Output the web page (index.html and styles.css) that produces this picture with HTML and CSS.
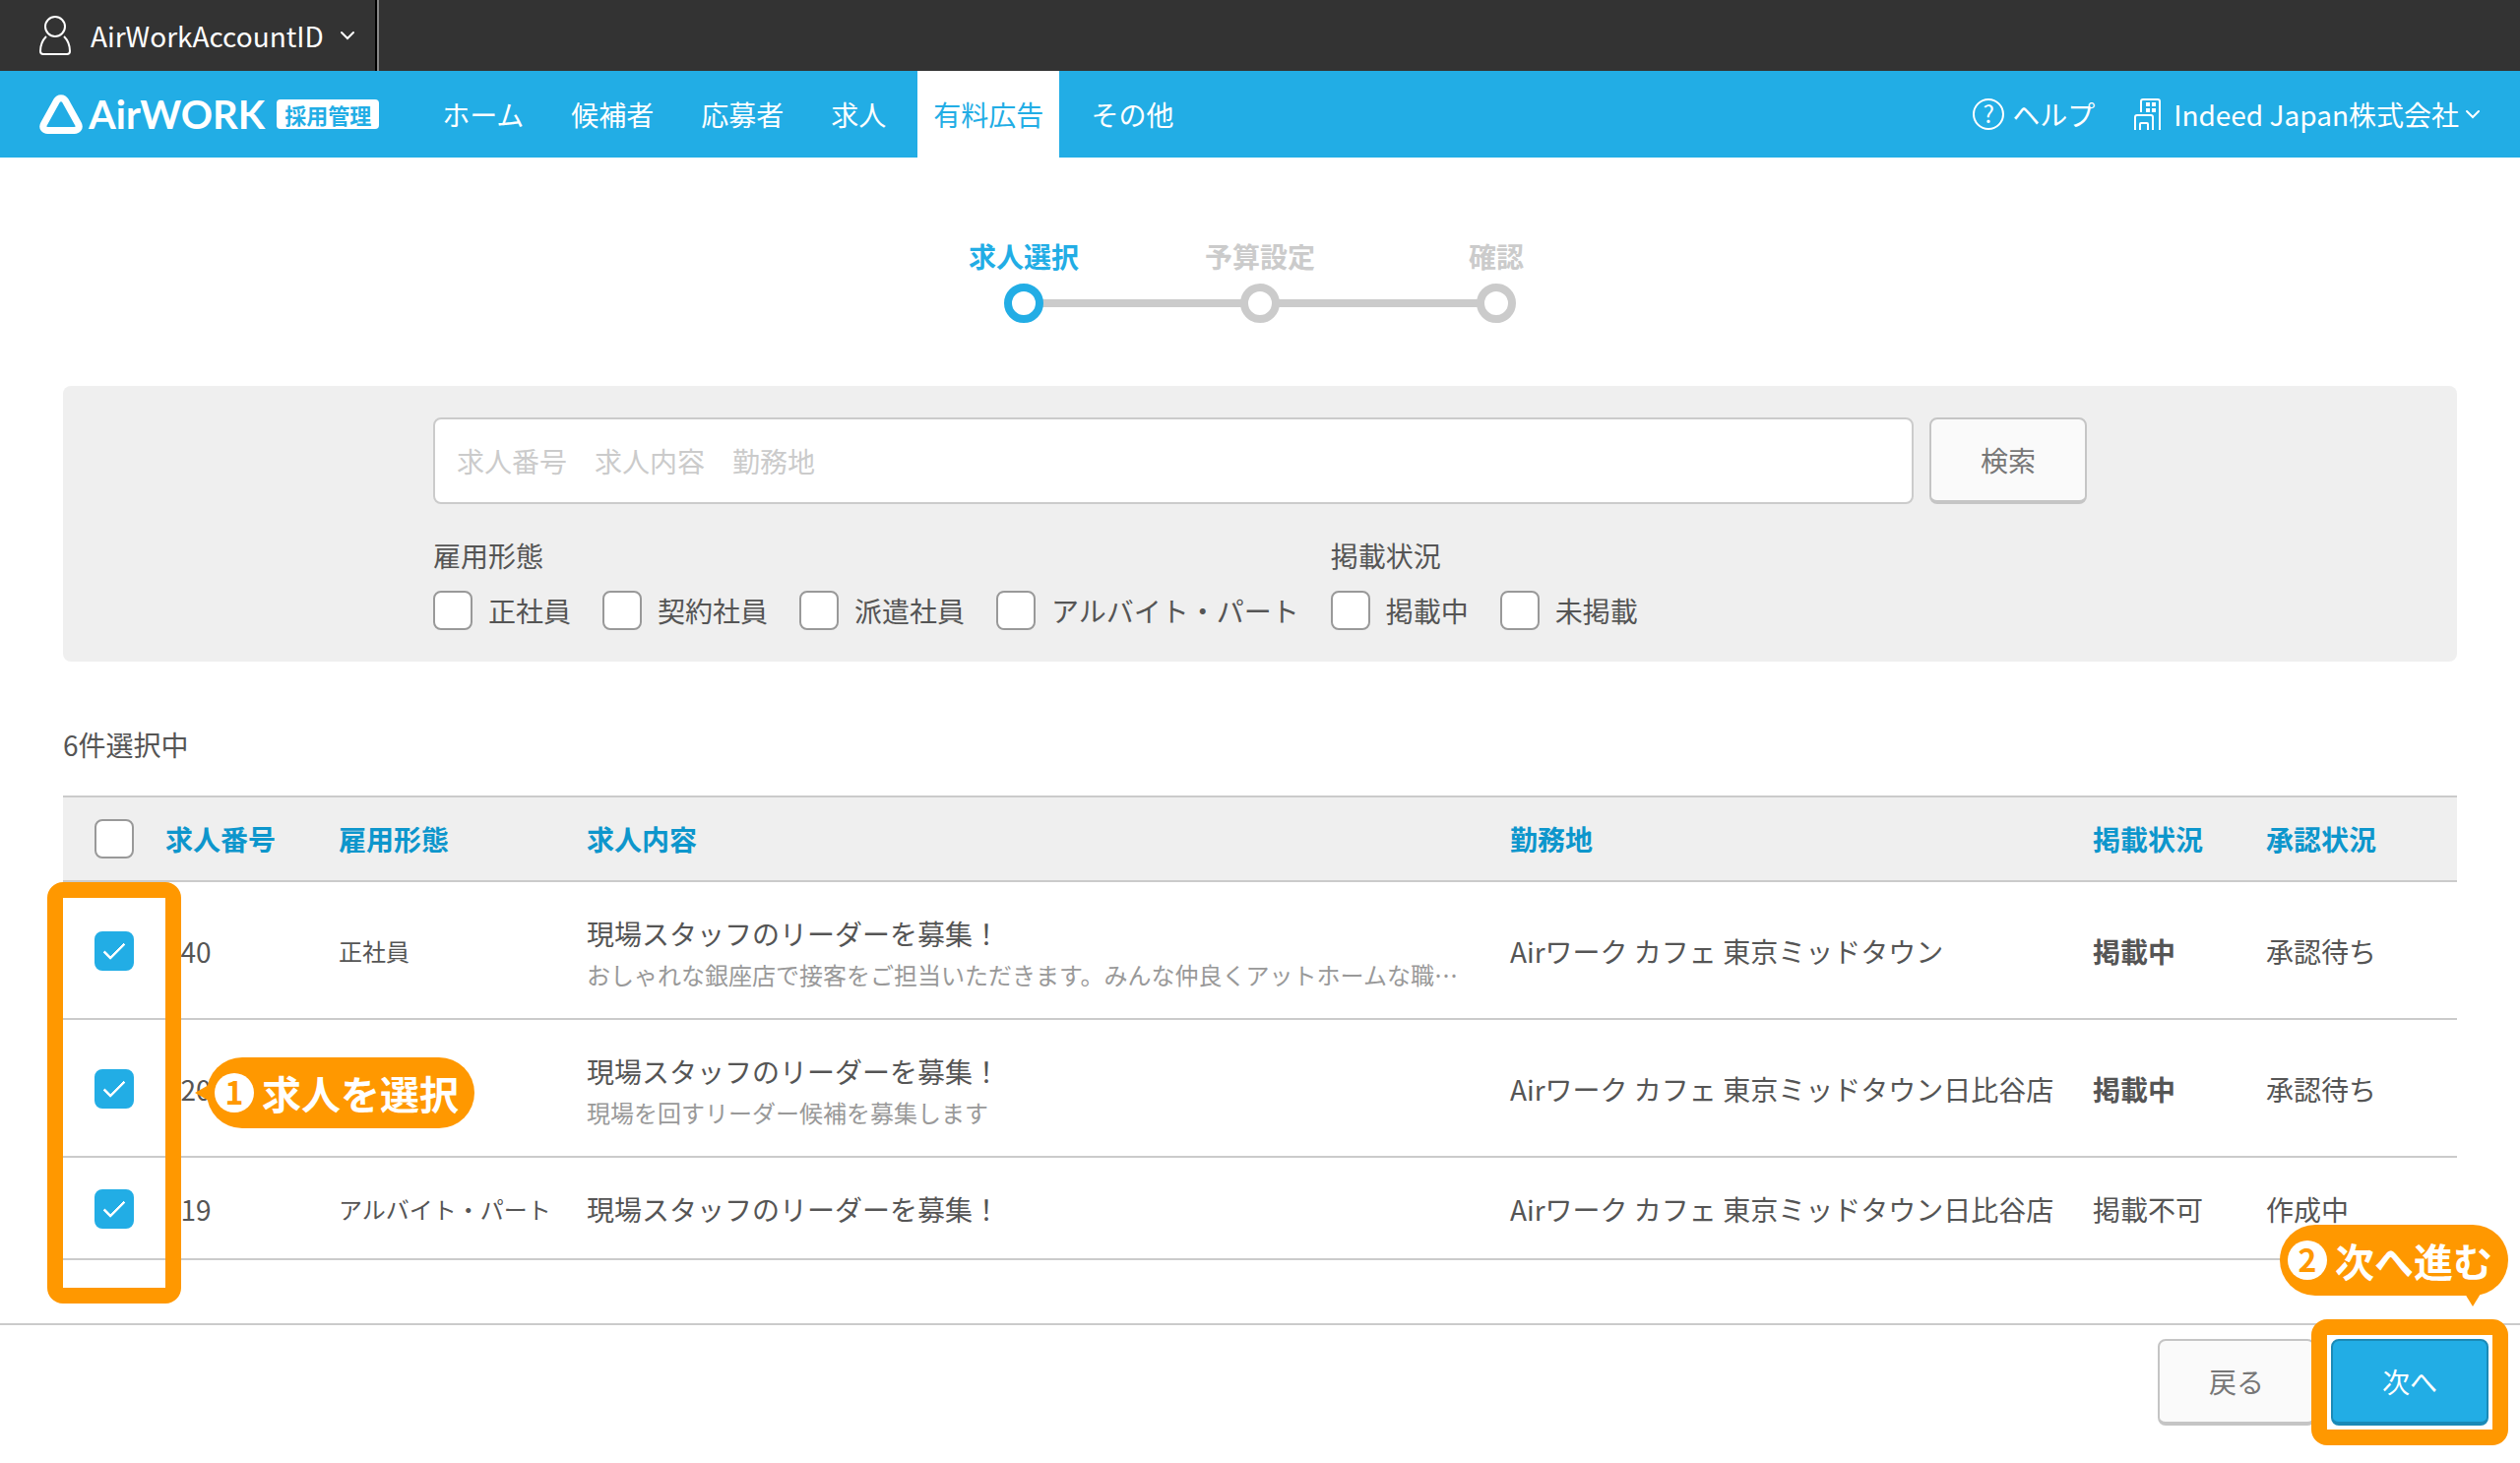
FILE: index.html
```html
<!DOCTYPE html>
<html lang="ja">
<head>
    <meta charset="utf-8">
    <title>有料広告 - 求人選択</title>
    <link rel="stylesheet" href="styles.css">
</head>
<body>
    <div class="account-bar">
        <button type="button" class="account">
            <svg class="icon-user" width="32" height="40" viewBox="0 0 32 40">
                <ellipse cx="16" cy="11" rx="10" ry="10" />
                <path d="M7 21C3 25 1 29 1 36q0 3 3 3h24q3 0 3-3C31 29 29 25 25 21" />
            </svg>
            <span class="account-name">AirWorkAccountID</span>
            <svg class="icon-chevron" width="16" height="10" viewBox="0 0 16 10"><path d="M2 2l6 6 6-6" /></svg>
        </button>
    </div>

    <header class="header">
        <a href="#" class="logo">
            <svg width="44" height="40" viewBox="0 0 44 40">
                <path d="M17.5 6.5C19.5 2.7 24.5 2.7 26.5 6.5L39.5 30C41.5 33.5 39 36.5 35.5 36.5H8.5C5 36.5 2.5 33.5 4.5 30Z" />
            </svg>
            <span class="logo-name">AirWORK</span>
            <span class="logo-badge">採用管理</span>
        </a>
        <nav class="nav">
            <a href="#">ホーム</a>
            <a href="#">候補者</a>
            <a href="#">応募者</a>
            <a href="#">求人</a>
            <a href="#" class="active">有料広告</a>
            <a href="#">その他</a>
        </nav>
        <div class="header-right">
            <a href="#" class="help"><span class="help-mark">?</span>ヘルプ</a>
            <button type="button" class="company">
                <svg class="icon-building" width="28" height="32" viewBox="0 0 28 32">
                    <path d="M7 14V3q0-2 2-2h15q2 0 2 2v29M1 32V19q0-2 2-2h14q2 0 2 2v13M6 32v-6q0-1 1-1h6q1 0 1 1v6" />
                    <path class="windows" d="M12 4h4v4h-4zM18 4h4v4h-4zM12 10h4v4h-4zM18 10h4v4h-4z" />
                </svg>
                <span>Indeed Japan株式会社</span>
                <svg class="icon-chevron" width="16" height="10" viewBox="0 0 16 10"><path d="M2 2l6 6 6-6" /></svg>
            </button>
        </div>
    </header>

    <main class="main">
        <ol class="steps">
            <li class="current">求人選択</li>
            <li>予算設定</li>
            <li>確認</li>
        </ol>

        <form class="search">
            <div class="search-inner">
                <div class="search-row">
                    <input type="text" class="keyword" aria-label="検索キーワード" placeholder="求人番号　求人内容　勤務地">
                    <button type="button" class="btn">検索</button>
                </div>
                <div class="filters">
                    <fieldset>
                        <legend>雇用形態</legend>
                        <div class="checks">
                            <label><input type="checkbox">正社員</label>
                            <label><input type="checkbox">契約社員</label>
                            <label><input type="checkbox">派遣社員</label>
                            <label><input type="checkbox">アルバイト・パート</label>
                        </div>
                    </fieldset>
                    <fieldset>
                        <legend>掲載状況</legend>
                        <div class="checks">
                            <label><input type="checkbox">掲載中</label>
                            <label><input type="checkbox">未掲載</label>
                        </div>
                    </fieldset>
                </div>
            </div>
        </form>

        <p class="count">6件選択中</p>

        <div class="table-wrap">
            <table class="jobs">
                <colgroup>
                    <col class="col-check">
                    <col class="col-no">
                    <col class="col-type">
                    <col>
                    <col class="col-place">
                    <col class="col-status">
                    <col class="col-approval">
                </colgroup>
                <thead>
                    <tr>
                        <th class="check"><input type="checkbox" aria-label="すべて選択"></th>
                        <th>求人番号</th>
                        <th>雇用形態</th>
                        <th>求人内容</th>
                        <th>勤務地</th>
                        <th>掲載状況</th>
                        <th>承認状況</th>
                    </tr>
                </thead>
                <tbody>
                    <tr class="tall">
                        <td class="check"><input type="checkbox" aria-label="140を選択" checked></td>
                        <td>140</td>
                        <td class="type">正社員</td>
                        <td>
                            <div class="summary">
                                <div>現場スタッフのリーダーを募集！</div>
                                <div class="note">おしゃれな銀座店で接客をご担当いただきます。みんな仲良くアットホームな職…</div>
                            </div>
                        </td>
                        <td>Airワーク カフェ 東京ミッドタウン</td>
                        <td><b>掲載中</b></td>
                        <td>承認待ち</td>
                    </tr>
                    <tr class="tall">
                        <td class="check"><input type="checkbox" aria-label="120を選択" checked></td>
                        <td>120</td>
                        <td class="type"></td>
                        <td>
                            <div class="summary">
                                <div>現場スタッフのリーダーを募集！</div>
                                <div class="note">現場を回すリーダー候補を募集します</div>
                            </div>
                        </td>
                        <td>Airワーク カフェ 東京ミッドタウン日比谷店</td>
                        <td><b>掲載中</b></td>
                        <td>承認待ち</td>
                    </tr>
                    <tr>
                        <td class="check"><input type="checkbox" aria-label="119を選択" checked></td>
                        <td>119</td>
                        <td class="type">アルバイト・パート</td>
                        <td>現場スタッフのリーダーを募集！</td>
                        <td>Airワーク カフェ 東京ミッドタウン日比谷店</td>
                        <td>掲載不可</td>
                        <td>作成中</td>
                    </tr>
                </tbody>
            </table>
            <div class="frame frame-rows"></div>
            <div class="balloon balloon-rows"><span class="num">1</span>求人を選択</div>
        </div>
    </main>

    <footer class="footer">
        <button type="button" class="btn">戻る</button>
        <div class="next">
            <button type="button" class="btn btn-primary">次へ</button>
            <div class="frame frame-next"></div>
            <div class="balloon balloon-next"><span class="num">2</span>次へ進む</div>
        </div>
    </footer>
</body>
</html>
```
FILE: styles.css
```css
*, *::before, *::after { margin: 0; padding: 0; box-sizing: border-box; }
body {
    display: flex;
    flex-direction: column;
    min-height: 100vh;
    background: #fff;
    color: #555;
    font-family: "Noto Sans CJK JP", sans-serif;
    font-size: 28px;
    line-height: 40px;
}
a { color: inherit; text-decoration: none; }
button, input { font: inherit; color: inherit; }
button { cursor: pointer; }
svg { flex: none; fill: none; stroke: #fff; stroke-width: 2; }

/* account bar */
.account-bar { display: flex; height: 72px; background: #333; }
.account {
    display: flex;
    align-items: center;
    padding: 0 20px 0 40px;
    border: 0;
    border-right: 2px solid #000;
    box-shadow: 2px 0 0 #888;
    background: none;
    color: #fff;
}
.account-name { margin: 0 16px 0 20px; }
.icon-chevron { stroke-width: 2; stroke-linecap: round; }

/* header */
.header { display: flex; height: 88px; padding: 0 40px; background: #22ade5; color: #fff; }
.logo { display: flex; align-items: center; }
.logo svg { stroke-width: 7; }
.logo-name { margin: 0 12px 0 6px; font-family: Lato, sans-serif; font-size: 40px; font-weight: bold; }
.logo-badge {
    padding: 0 8px;
    border-radius: 4px;
    background: #fff;
    color: #22ade5;
    font-size: 22px;
    font-weight: bold;
    line-height: 30px;
}
.nav { display: flex; gap: 16px; margin-left: 48px; }
.nav a { padding: 0 16px; line-height: 88px; }
.nav .active { background: #fff; color: #22ade5; }
.header-right { display: flex; align-items: center; gap: 40px; margin-left: auto; }
.help { display: flex; align-items: center; gap: 8px; }
.help-mark {
    width: 32px;
    height: 32px;
    border: 2px solid #fff;
    border-radius: 50%;
    font-size: 24px;
    line-height: 26px;
    text-align: center;
}
.company { display: flex; align-items: center; border: 0; background: none; color: #fff; }
.company span { margin: 0 6px 0 12px; }
.icon-building .windows { fill: #fff; stroke: none; }

.main { flex: 1; padding: 80px 64px 64px; }

/* steps */
.steps { display: flex; justify-content: center; list-style: none; }
.steps li { position: relative; width: 240px; color: #cbcbcb; font-weight: bold; text-align: center; }
.steps li::after {
    content: "";
    display: block;
    width: 40px;
    height: 40px;
    margin: 8px auto 0;
    border: 8px solid #cbcbcb;
    border-radius: 50%;
}
.steps li + li::before {
    content: "";
    position: absolute;
    right: 50%;
    bottom: 16px;
    width: 204px;
    height: 8px;
    margin-right: 18px;
    background: #cbcbcb;
}
.steps .current { z-index: 1; color: #22ade5; }
.steps .current::after { border-color: #22ade5; }

/* buttons */
.btn {
    flex: none;
    width: 160px;
    height: 88px;
    border: 2px solid #c5c5c5;
    border-bottom-width: 4px;
    border-radius: 8px;
    background: #fafafa;
    color: #777;
}
.btn-primary { border-color: #1b8ab7; background: #22ade5; color: #fff; }

/* checkboxes */
input[type=checkbox] {
    appearance: none;
    flex: none;
    display: block;
    position: relative;
    width: 40px;
    height: 40px;
    border: 2px solid #999;
    border-radius: 8px;
    background: #fff;
}
input[type=checkbox]:checked { border-color: #22ade5; background: #22ade5; }
input[type=checkbox]:checked::after {
    content: "";
    position: absolute;
    top: 10px;
    left: 7px;
    width: 22px;
    height: 11px;
    border: solid #fff;
    border-width: 0 0 3px 3px;
    border-radius: 1px;
    transform: rotate(-45deg);
}

/* search */
.search { margin-top: 64px; padding: 32px; border-radius: 8px; background: #efefef; }
.search-inner { max-width: 1680px; margin: 0 auto; }
.search-row { display: flex; gap: 16px; }
.keyword {
    flex: 1;
    height: 88px;
    padding: 0 22px;
    border: 2px solid #cbcbcb;
    border-radius: 8px;
    background: #fff;
}
.keyword::placeholder { color: #cbcbcb; }
.filters { display: flex; gap: 32px; margin-top: 32px; }
fieldset { border: 0; }
.checks { display: flex; gap: 32px; margin-top: 16px; }
.checks label { display: flex; gap: 16px; }

.count { margin-top: 64px; }

/* table */
.table-wrap { position: relative; margin-top: 32px; }
.jobs { width: 100%; border-top: 2px solid #cbcbcb; border-spacing: 0; table-layout: fixed; }
.col-check { width: 104px; }
.col-no { width: 176px; }
.col-type { width: 252px; }
.col-place { width: 592px; }
.col-status { width: 176px; }
.col-approval { width: 194px; }
.jobs th, .jobs td { border-bottom: 2px solid #cbcbcb; text-align: left; white-space: nowrap; }
.jobs th { height: 86px; background: #efefef; color: #0d96cc; }
.jobs td { height: 104px; padding-top: 2px; }
.jobs .tall td { height: 140px; }
.jobs .check { padding-left: 32px; }
.jobs .type { font-size: 24px; }
.summary { padding-top: 4px; }
.note { margin-top: 4px; color: #999; font-size: 24px; line-height: 36px; }

/* guide frames and balloons */
.frame { position: absolute; border: 16px solid #ff9800; border-radius: 16px; pointer-events: none; }
.balloon {
    display: flex;
    align-items: center;
    gap: 8px;
    position: absolute;
    height: 72px;
    padding: 0 16px 0 8px;
    border-radius: 36px;
    background: #ff9800;
    color: #fff;
    font-size: 40px;
    font-weight: bold;
    white-space: nowrap;
}
.balloon::before { content: ""; position: absolute; border: 8px solid transparent; }
.num {
    width: 40px;
    height: 40px;
    border-radius: 50%;
    background: #fff;
    color: #ff9800;
    font-size: 32px;
    line-height: 36px;
    text-align: center;
}
.frame-rows { top: 88px; left: -16px; width: 136px; height: 428px; }
.balloon-rows { top: 266px; left: 146px; }
.balloon-rows::before { top: 28px; left: -12px; border-left: 0; border-right: 14px solid #ff9800; }

.footer { display: flex; justify-content: flex-end; gap: 16px; padding: 14px 32px 38px; border-top: 2px solid #cbcbcb; }
.next { position: relative; }
.frame-next { top: -20px; left: -20px; width: 200px; height: 128px; }
.balloon-next { right: -20px; bottom: 132px; }
.balloon-next::before { bottom: -11px; right: 28px; border-bottom: 0; border-top: 13px solid #ff9800; }
```
